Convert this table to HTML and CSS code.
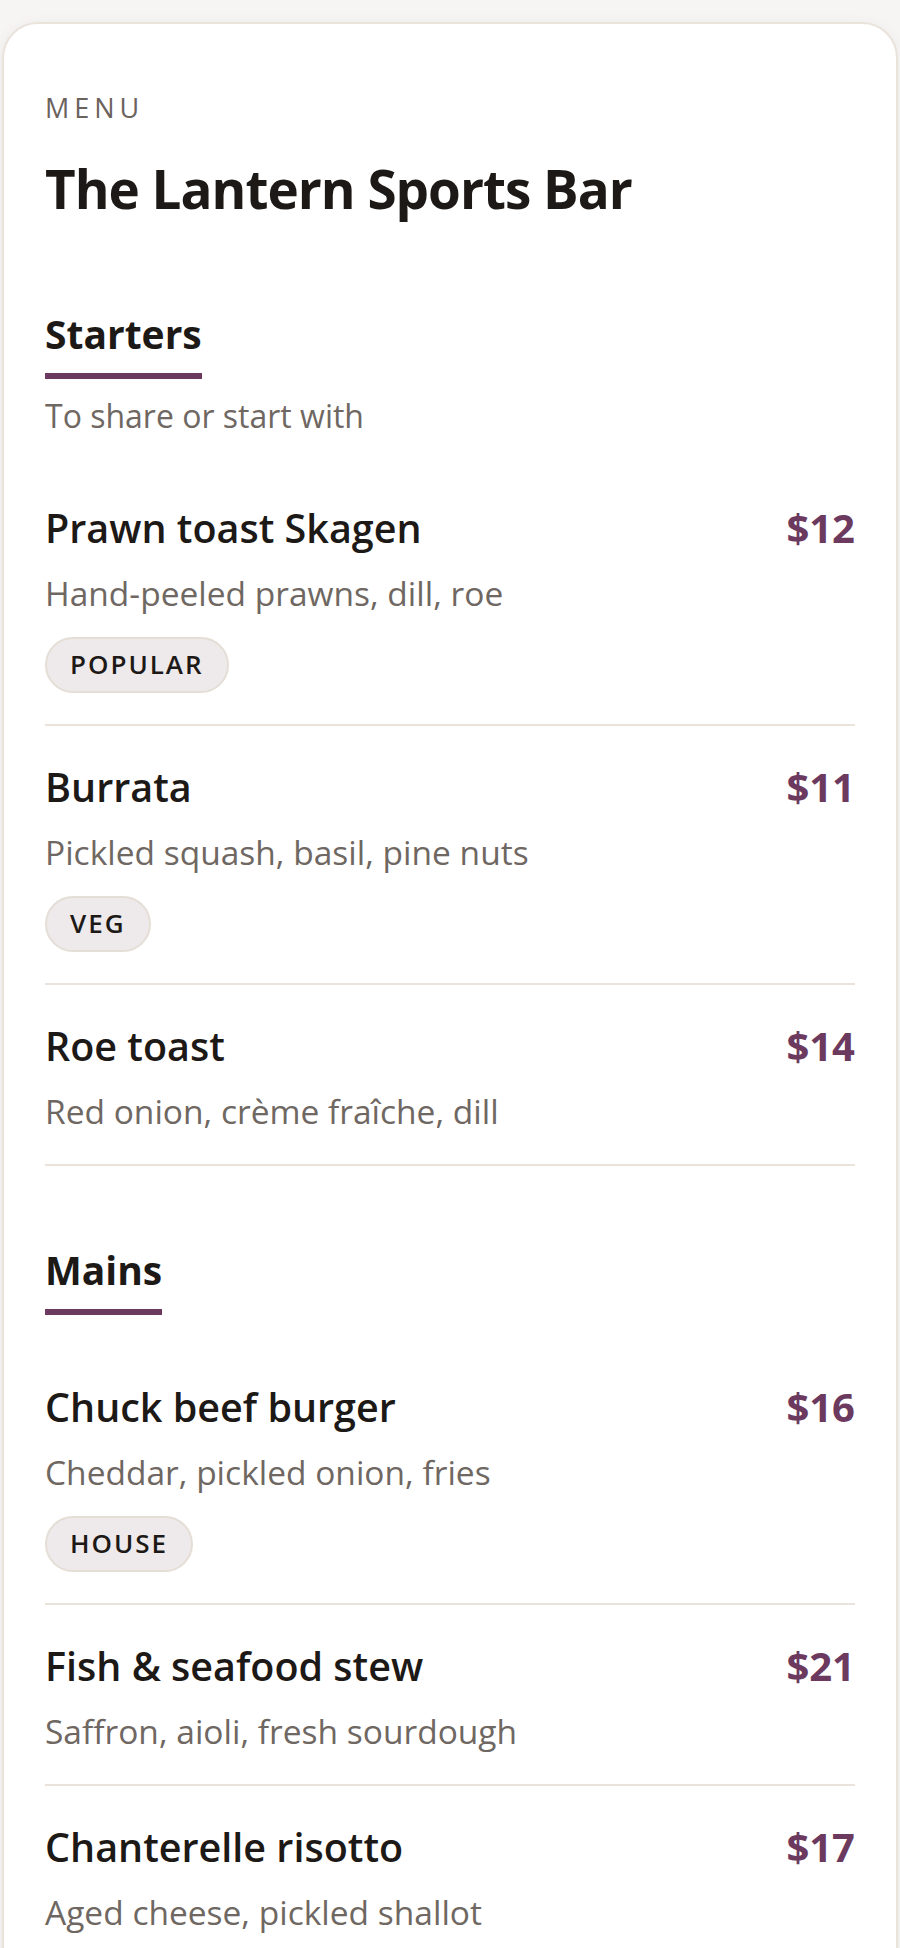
FILE: index.html
```html
<!DOCTYPE html>
<html lang="en">
<head>
<meta charset="utf-8">
<title>The Lantern Sports Bar — Menu</title>
<link rel="stylesheet" href="styles.css">
</head>
<body>
<main class="card">
  <p class="eyebrow">MENU</p>
  <h1 class="title">The Lantern Sports Bar</h1>

  <div class="sections">
    <section class="section">
      <div class="section-head">
        <h2 class="section-title">Starters</h2>
        <p class="section-sub">To share or start with</p>
      </div>
      <ul class="items">
        <li class="item">
          <div class="item-row">
            <h3 class="item-name">Prawn toast Skagen</h3>
            <span class="item-price">$12</span>
          </div>
          <p class="item-desc">Hand-peeled prawns, dill, roe</p>
          <span class="badge">POPULAR</span>
        </li>
        <li class="item">
          <div class="item-row">
            <h3 class="item-name">Burrata</h3>
            <span class="item-price">$11</span>
          </div>
          <p class="item-desc">Pickled squash, basil, pine nuts</p>
          <span class="badge">VEG</span>
        </li>
        <li class="item">
          <div class="item-row">
            <h3 class="item-name">Roe toast</h3>
            <span class="item-price">$14</span>
          </div>
          <p class="item-desc">Red onion, crème fraîche, dill</p>
        </li>
      </ul>
    </section>

    <section class="section">
      <div class="section-head">
        <h2 class="section-title">Mains</h2>
      </div>
      <ul class="items">
        <li class="item">
          <div class="item-row">
            <h3 class="item-name">Chuck beef burger</h3>
            <span class="item-price">$16</span>
          </div>
          <p class="item-desc">Cheddar, pickled onion, fries</p>
          <span class="badge">HOUSE</span>
        </li>
        <li class="item">
          <div class="item-row">
            <h3 class="item-name">Fish &amp; seafood stew</h3>
            <span class="item-price">$21</span>
          </div>
          <p class="item-desc">Saffron, aioli, fresh sourdough</p>
        </li>
        <li class="item">
          <div class="item-row">
            <h3 class="item-name">Chanterelle risotto</h3>
            <span class="item-price">$17</span>
          </div>
          <p class="item-desc">Aged cheese, pickled shallot</p>
        </li>
      </ul>
    </section>
  </div>
</main>
</body>
</html>
```
FILE: styles.css
```css
* { box-sizing: border-box; }

html, body {
  margin: 0;
  background: #f6f5f3;
}

body {
  padding: 22px 2px 0;
  font-family: "Open Sans", "Noto Sans", sans-serif;
  color: #1d1916;
}

.card {
  background: #ffffff;
  border: 2px solid #e9e3dc;
  border-radius: 36px;
  padding: 66px 41px 80px;
  box-shadow: 0 2px 14px rgba(60, 40, 20, 0.05);
}

.eyebrow {
  margin: 0;
  font-size: 27px;
  line-height: 36px;
  letter-spacing: 5px;
  color: #6b625d;
  font-weight: 400;
}

.title {
  margin: 31px 0 0;
  font-size: 53px;
  line-height: 64px;
  font-weight: 700;
  letter-spacing: -1px;
  color: #1d1916;
}

.sections {
  display: flex;
  flex-direction: column;
  gap: 78px;
  margin-top: 87px;
}

.section-head {
  margin-bottom: 31px;
}

.section-title {
  display: inline-block;
  margin: 0;
  font-size: 39px;
  line-height: 52px;
  font-weight: 700;
  padding-bottom: 13px;
  border-bottom: 6px solid #6b3a5e;
  color: #1d1916;
}

.section-sub {
  margin: 17px 0 2px;
  font-size: 32px;
  line-height: 40px;
  color: #6f6762;
}

.items {
  list-style: none;
  margin: 0;
  padding: 0;
}

.item {
  padding: 35px 0 31px;
  border-bottom: 2px solid #e9e3dc;
}

.item-row {
  display: flex;
  justify-content: space-between;
  align-items: baseline;
  gap: 24px;
}

.item-name {
  margin: 0;
  font-size: 39.5px;
  line-height: 52px;
  font-weight: 600;
  color: #1d1916;
}

.item-price {
  font-size: 40px;
  line-height: 52px;
  font-weight: 700;
  color: #6b3a5e;
}

.item-desc {
  margin: 17px 0 0;
  font-size: 33.5px;
  line-height: 44px;
  color: #6f6762;
}

.badge {
  display: inline-block;
  margin-top: 22px;
  padding: 10px 23px 12px;
  font-size: 26px;
  line-height: 30px;
  font-weight: 600;
  letter-spacing: 2px;
  color: #1d1916;
  background: #eeeaeb;
  border: 2px solid #e4ded6;
  border-radius: 999px;
}
```
